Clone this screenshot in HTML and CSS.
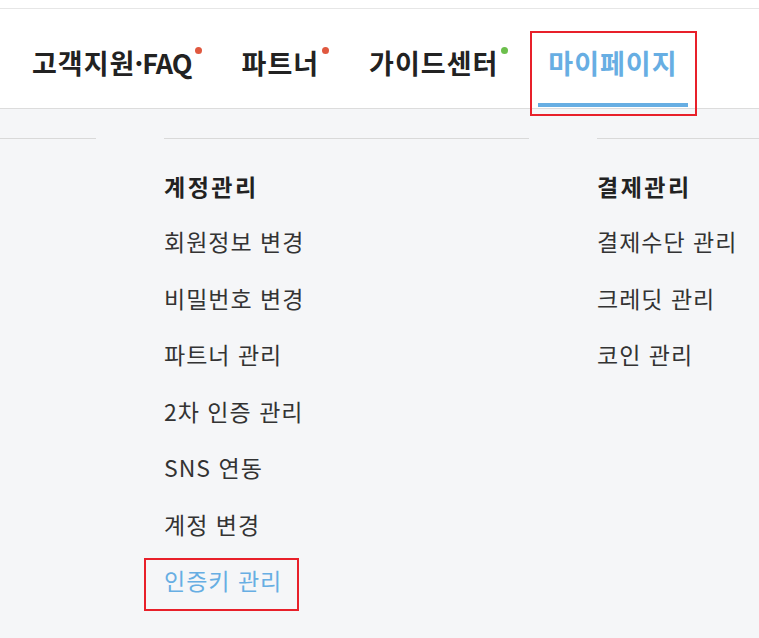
FILE: index.html
```html
<!DOCTYPE html>
<html lang="ko">
<head>
  <meta charset="UTF-8">
  <meta name="viewport" content="width=device-width, initial-scale=1.0">
  <title>마이페이지</title>
  <link rel="stylesheet" href="styles.css">
</head>
<body>

  <div class="top-bar"></div>

  <!-- Main navigation -->
  <header class="site-header">
    <nav class="main-nav">
      <a class="nav-item" href="#">고객지원<span class="sep">·</span><span class="latin">FAQ</span><span class="dot dot-red"></span></a>
      <a class="nav-item" href="#">파트너<span class="dot dot-red"></span></a>
      <a class="nav-item" href="#">가이드센터<span class="dot dot-green"></span></a>
      <a class="nav-item active marked" href="#">마이페이지</a>
    </nav>
  </header>

  <!-- Dropdown menu -->
  <div class="menu">
    <div class="menu-col"></div>

    <div class="menu-col">
      <h3>계정관리</h3>
      <ul>
        <li><a href="#">회원정보 변경</a></li>
        <li><a href="#">비밀번호 변경</a></li>
        <li><a href="#">파트너 관리</a></li>
        <li><a href="#">2차 인증 관리</a></li>
        <li><a href="#">SNS 연동</a></li>
        <li><a href="#">계정 변경</a></li>
        <li><a class="current marked" href="#">인증키 관리</a></li>
      </ul>
    </div>

    <div class="menu-col">
      <h3>결제관리</h3>
      <ul>
        <li><a href="#">결제수단 관리</a></li>
        <li><a href="#">크레딧 관리</a></li>
        <li><a href="#">코인 관리</a></li>
      </ul>
    </div>
  </div>

</body>
</html>
```

FILE: styles.css
```css
* {
  box-sizing: border-box;
  margin: 0;
  padding: 0;
}

body {
  font-family: "Noto Sans CJK KR", "Noto Sans", sans-serif;
  background-color: #f5f6f8;
  color: #333;
  height: 638px;
  overflow: hidden;
}

a {
  text-decoration: none;
  color: inherit;
}

.top-bar {
  height: 9px;
  background-color: #fff;
  border-bottom: 1px solid #e6e6e6;
}

.site-header {
  background-color: #fff;
  border-bottom: 1px solid #dcdcdc;
}

.main-nav {
  display: flex;
  height: 99px;
  padding-left: 22px;
  gap: 30px;
}

.nav-item {
  position: relative;
  display: block;
  padding: 35px 10px 0;
  font-size: 27px;
  font-weight: bold;
  line-height: 38px;
  color: #222;
  letter-spacing: 1px;
}

.nav-item .sep {
  letter-spacing: 0;
  margin: 0 -1px;
}

.nav-item .latin {
  letter-spacing: -1px;
}

.dot {
  position: absolute;
  top: 38px;
  right: 0;
  width: 7px;
  height: 7px;
  border-radius: 50%;
}

.dot-red {
  background-color: #e0583f;
}

.dot-green {
  background-color: #6cbf4c;
}

.nav-item.active {
  color: #67aee3;
}

.nav-item.active::after {
  content: "";
  position: absolute;
  left: 0;
  right: 0;
  bottom: 1px;
  height: 4px;
  background-color: #67aee3;
}

/* red annotation boxes */
.marked::before {
  content: "";
  position: absolute;
  border: 2px solid #e8202a;
}

.nav-item.marked::before {
  left: -8px;
  right: -9px;
  top: 22px;
  bottom: -8px;
}

.menu {
  display: grid;
  grid-template-columns: 96px 365px 365px;
  column-gap: 68px;
  margin-top: 29px;
}

.menu-col {
  border-top: 1px solid #d9d9d9;
  padding-top: 31px;
}

.menu-col h3 {
  font-size: 23px;
  font-weight: bold;
  line-height: 32px;
  color: #222;
  letter-spacing: 2.5px;
  margin-bottom: 23px;
}

.menu-col ul {
  list-style: none;
  display: flex;
  flex-direction: column;
  gap: 24px;
}

.menu-col li a {
  position: relative;
  display: inline-block;
  font-size: 23px;
  line-height: 32.5px;
  letter-spacing: 1px;
  color: #333;
}

.menu-col li a.current {
  color: #67aee3;
}

.menu-col li a.marked::before {
  left: -20px;
  right: -17px;
  top: -6px;
  bottom: -14px;
}
```
